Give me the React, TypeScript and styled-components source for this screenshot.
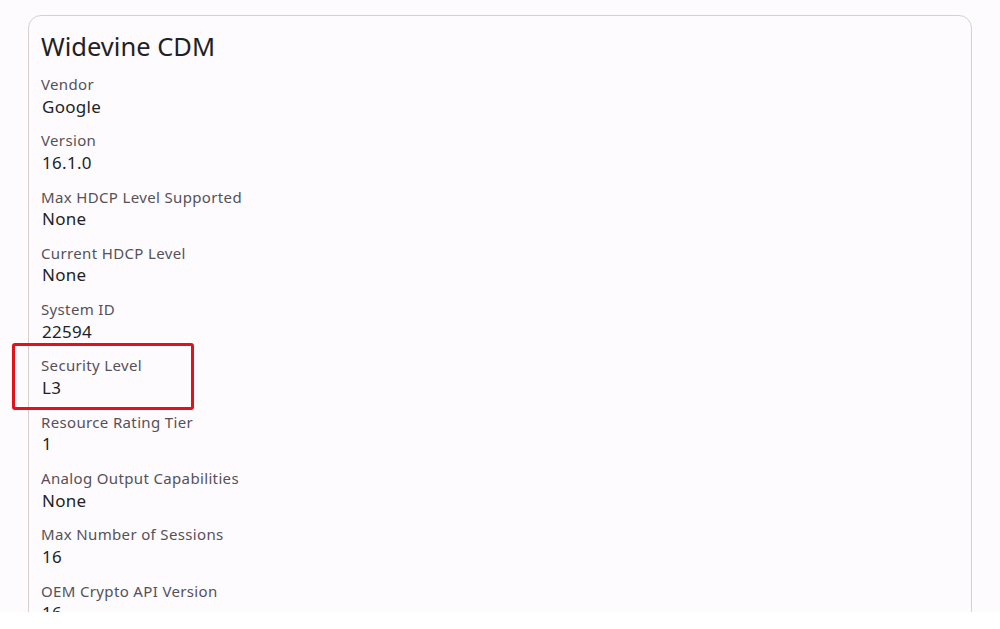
import React from "react";
import styled, { createGlobalStyle } from "styled-components";

const Global = createGlobalStyle`
  html, body { margin: 0; padding: 0; background: #ffffff; }
  body { font-family: "Noto Sans", "DejaVu Sans", sans-serif; }
`;

const Page = styled.div`
  width: 1000px;
  height: 629px;
  display: flex;
  flex-direction: column;
  background: #ffffff;
`;

const Viewport = styled.div`
  position: relative;
  height: 612px;
  overflow: hidden;
  background: #fdfbfd;
  padding: 15px 28px 0 28px;
  box-sizing: border-box;
`;

const Card = styled.section`
  border: 1px solid #d8d0cf;
  border-radius: 13px;
  padding: 12px 12px 20px 12px;
  background: #fdfbfd;
`;

const Title = styled.h1`
  margin: 0 0 9px 0;
  font-size: 25.5px;
  font-weight: 400;
  line-height: 36px;
  color: #231f26;
  letter-spacing: 0;
`;

const Row = styled.div`
  display: flex;
  flex-direction: column;
  margin-bottom: 11.3px;
`;

const Label = styled.div`
  font-size: 15px;
  line-height: 22.5px;
  color: #55515a;
  letter-spacing: 0.35px;
`;

const Value = styled.div`
  font-size: 17px;
  line-height: 22.5px;
  color: #231f26;
  letter-spacing: 0.3px;
  padding-left: 1px;
`;

const Highlight = styled.div`
  position: absolute;
  left: 12px;
  top: 343px;
  width: 182px;
  height: 67px;
  box-sizing: border-box;
  border: 3px solid #e3111a;
  border-radius: 3px;
  pointer-events: none;
`;

const rows: [string, string][] = [
  ["Vendor", "Google"],
  ["Version", "16.1.0"],
  ["Max HDCP Level Supported", "None"],
  ["Current HDCP Level", "None"],
  ["System ID", "22594"],
  ["Security Level", "L3"],
  ["Resource Rating Tier", "1"],
  ["Analog Output Capabilities", "None"],
  ["Max Number of Sessions", "16"],
  ["OEM Crypto API Version", "16"],
];

export default function App() {
  return (
    <Page>
      <Global />
      <Viewport>
        <Card>
          <Title>Widevine CDM</Title>
          {rows.map(([l, v]) => (
            <Row key={l}>
              <Label>{l}</Label>
              <Value>{v}</Value>
            </Row>
          ))}
        </Card>
        <Highlight />
      </Viewport>
    </Page>
  );
}
